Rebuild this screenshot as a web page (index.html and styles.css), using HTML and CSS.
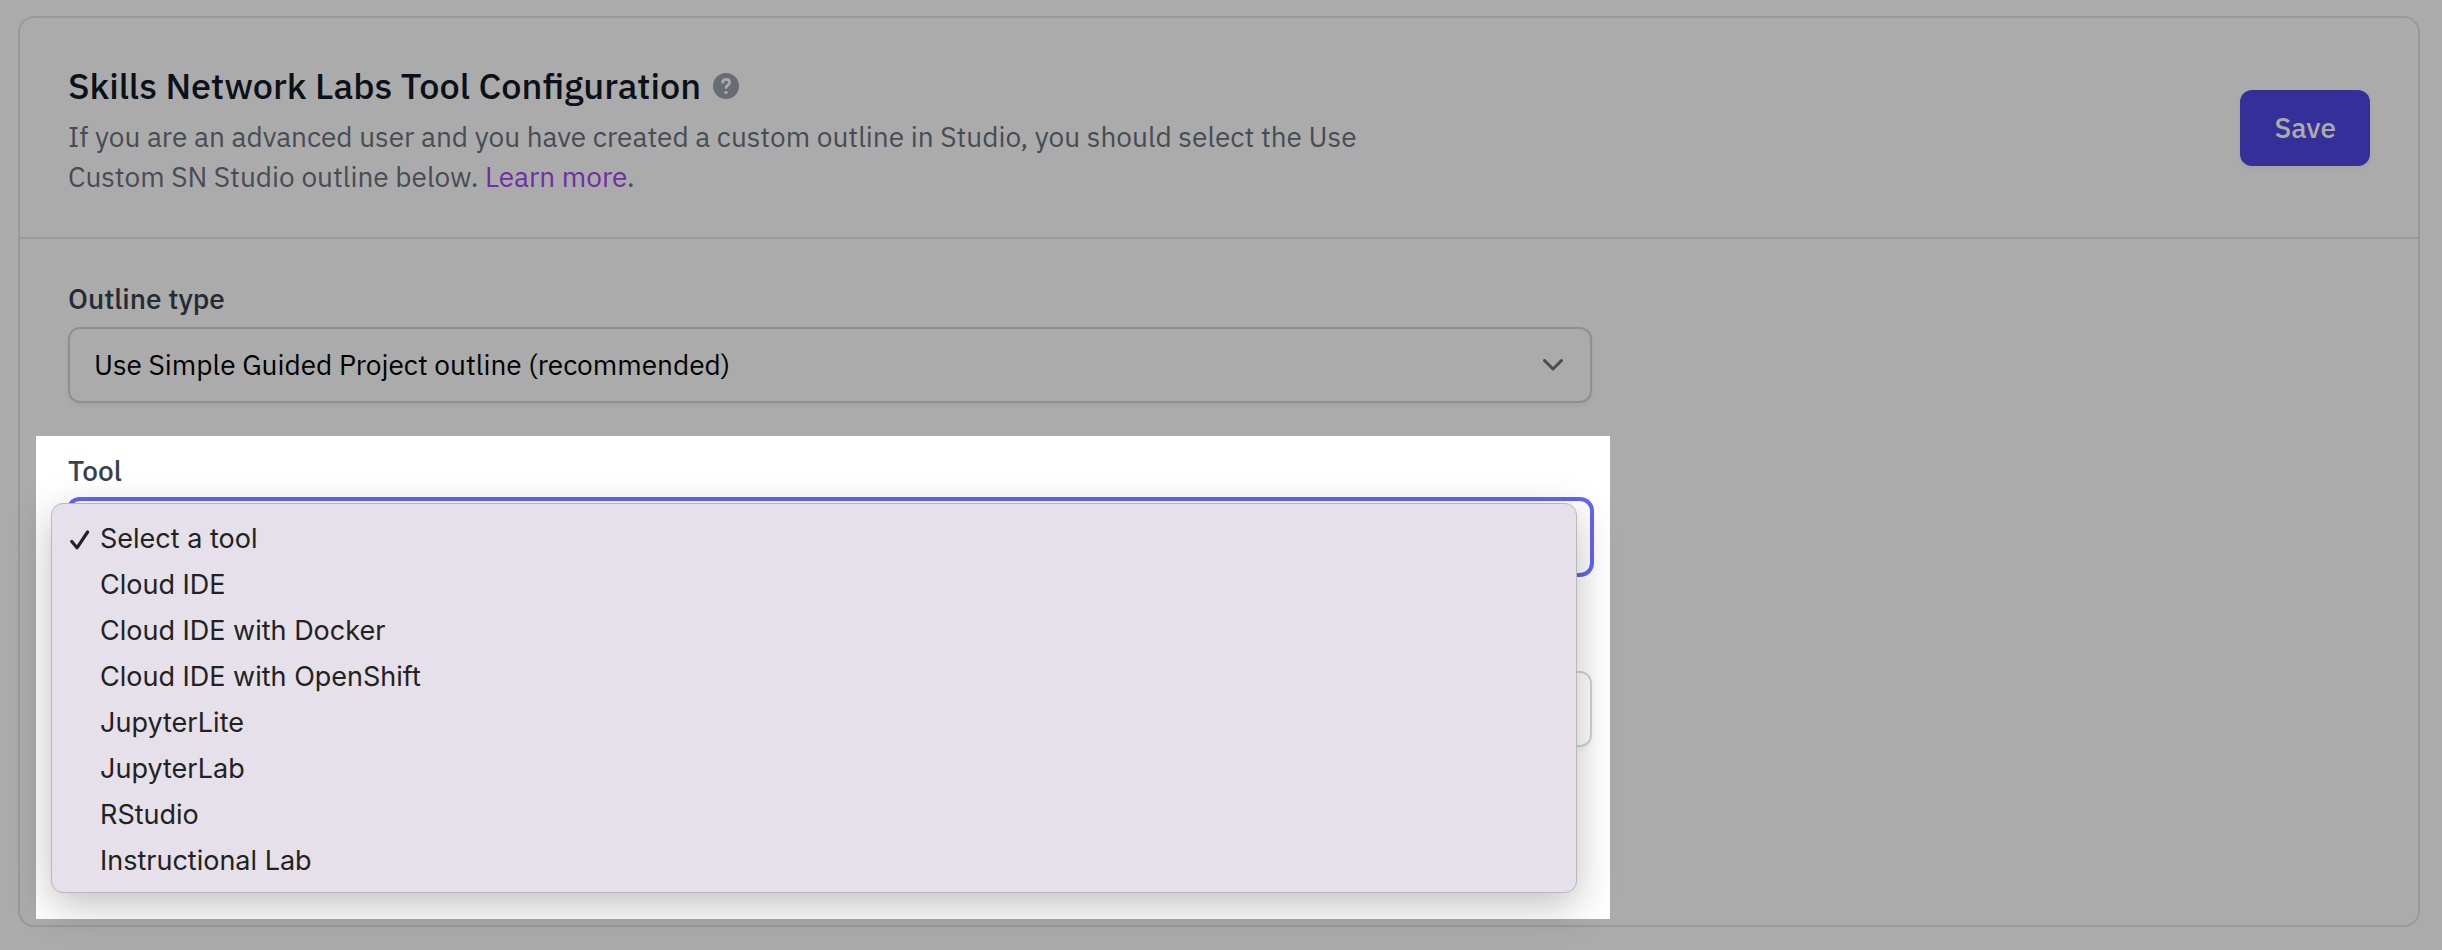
FILE: index.html
```html
<!DOCTYPE html>
<html lang="en">
<head>
<meta charset="utf-8">
<title>Skills Network Labs Tool Configuration</title>
<link rel="stylesheet" href="styles.css">
</head>
<body>
<main class="card">
  <header class="card-header">
    <div class="intro">
      <h1 class="title">Skills Network Labs Tool Configuration
        <svg class="help" viewBox="0 0 26 26" role="img" aria-label="Help"><circle cx="13" cy="13" r="13" fill="#9ca3af"/><path d="M9.600 9.200C9.900 7.400 11.200 6.400 13.100 6.400c2 0 3.500 1.200 3.500 3 0 2.800-3.600 2.900-3.600 5.200" fill="none" stroke="#fff" stroke-width="2.800" stroke-linecap="round"/><circle cx="13" cy="19.400" r="1.700" fill="#fff"/></svg>
      </h1>
      <p class="description">If you are an advanced user and you have created a custom outline in Studio, you should select the Use Custom SN Studio outline below. <a class="link" href="#">Learn more</a>.</p>
    </div>
    <button class="save" type="button">Save</button>
  </header>
  <form class="fields">
    <div class="field">
      <label class="label" for="outline">Outline type</label>
      <div class="control">
        <select class="select" id="outline"><option>Use Simple Guided Project outline (recommended)</option></select>
        <svg class="chevron" viewBox="0 0 20 12" aria-hidden="true"><path d="M1.500 1.500 10 10l8.500-8.500" fill="none" stroke="#6b7280" stroke-width="3" stroke-linecap="round" stroke-linejoin="round"/></svg>
      </div>
    </div>
    <div class="highlighted">
      <div class="field">
        <label class="label" for="tool">Tool</label>
        <select class="select select-focused" id="tool"></select>
      </div>
      <input class="select" type="text" aria-label="Details">
      <ul class="menu" role="listbox" aria-label="Tool">
        <li class="option" role="option" aria-selected="true"><svg class="check" viewBox="0 0 20 20" aria-hidden="true"><path d="M1.800 11.500 7 17.800 17.600 2" fill="none" stroke="#222" stroke-width="3.200" stroke-linecap="round" stroke-linejoin="round"/></svg>Select a tool</li>
        <li class="option" role="option">Cloud IDE</li>
        <li class="option" role="option">Cloud IDE with Docker</li>
        <li class="option" role="option">Cloud IDE with OpenShift</li>
        <li class="option" role="option">JupyterLite</li>
        <li class="option" role="option">JupyterLab</li>
        <li class="option" role="option">RStudio</li>
        <li class="option" role="option">Instructional Lab</li>
      </ul>
      <div class="spotlight"></div>
    </div>
  </form>
</main>
</body>
</html>
```
FILE: styles.css
```css
* { box-sizing: border-box; }

body {
  margin: 0;
  padding: 16px 22px 23px 18px;
  background: #fff;
  color: #111827;
  font-family: "IBM Plex Sans", Roboto, "Liberation Sans", sans-serif;
  font-size: 28px;
  line-height: 40px;
  overflow: hidden;
}

.card {
  border: 2px solid #e4e4ea;
  border-radius: 16px;
}

.card-header {
  display: flex;
  align-items: center;
  justify-content: space-between;
  gap: 48px;
  padding: 40px 48px;
  border-bottom: 2px solid #e4e4ea;
}

.intro { max-width: 1344px; }

.title {
  display: flex;
  align-items: center;
  gap: 12px;
  margin: 0 0 3px;
  font-size: 36px;
  font-weight: 500;
  line-height: 56px;
}

.help {
  width: 26px;
  height: 26px;
}

.description {
  margin: 0;
  color: #6b7280;
}

.link {
  color: #a846fa;
  text-decoration: none;
}

.save {
  height: 76px;
  padding: 0 34px;
  border: 0;
  border-radius: 12px;
  background: #4f46e5;
  box-shadow: 0 2px 4px rgba(0, 0, 0, 0.05);
  color: #fff;
  font: inherit;
  font-weight: 500;
}

.fields {
  display: grid;
  grid-template-columns: repeat(3, 1fr);
  gap: 48px 32px;
  padding: 40px 48px 178px;
}

.fields > * { grid-column: 1 / span 2; }

.field {
  display: flex;
  flex-direction: column;
  gap: 8px;
}

.label {
  color: #374151;
  font-weight: 500;
}

.control { position: relative; }

.select {
  display: block;
  width: 100%;
  height: 76px;
  padding: 0 24px;
  border: 2px solid #d1d5db;
  border-radius: 12px;
  background: #fff;
  box-shadow: 0 2px 4px rgba(0, 0, 0, 0.05);
  color: #000;
  font: inherit;
  appearance: none;
}

.select-focused {
  border-color: #6366f1;
  box-shadow: 0 0 0 2px #6366f1;
}

.chevron {
  position: absolute;
  top: 32px;
  right: 29px;
  width: 20px;
  height: 12px;
}

.highlighted {
  position: relative;
  display: flex;
  flex-direction: column;
  gap: 96px;
}

.menu {
  position: absolute;
  top: 52px;
  left: -17px;
  right: 15px;
  margin: 0;
  padding: 12px 18px 8px;
  border: 1px solid #b9b6bd;
  border-radius: 12px;
  background: #e6e0ea;
  box-shadow: 0 12px 40px rgba(0, 0, 0, 0.25);
  color: #222;
  font-family: Inter, sans-serif;
  font-size: 27px;
  line-height: 46px;
  list-style: none;
}

.option {
  position: relative;
  padding-left: 30px;
}

.check {
  position: absolute;
  top: 14px;
  left: 0;
  width: 20px;
  height: 20px;
}

.spotlight {
  position: absolute;
  top: -15px;
  left: -32px;
  right: -18px;
  bottom: -172px;
  box-shadow: 0 0 0 3000px rgba(0, 0, 0, 0.33);
  pointer-events: none;
}
```
